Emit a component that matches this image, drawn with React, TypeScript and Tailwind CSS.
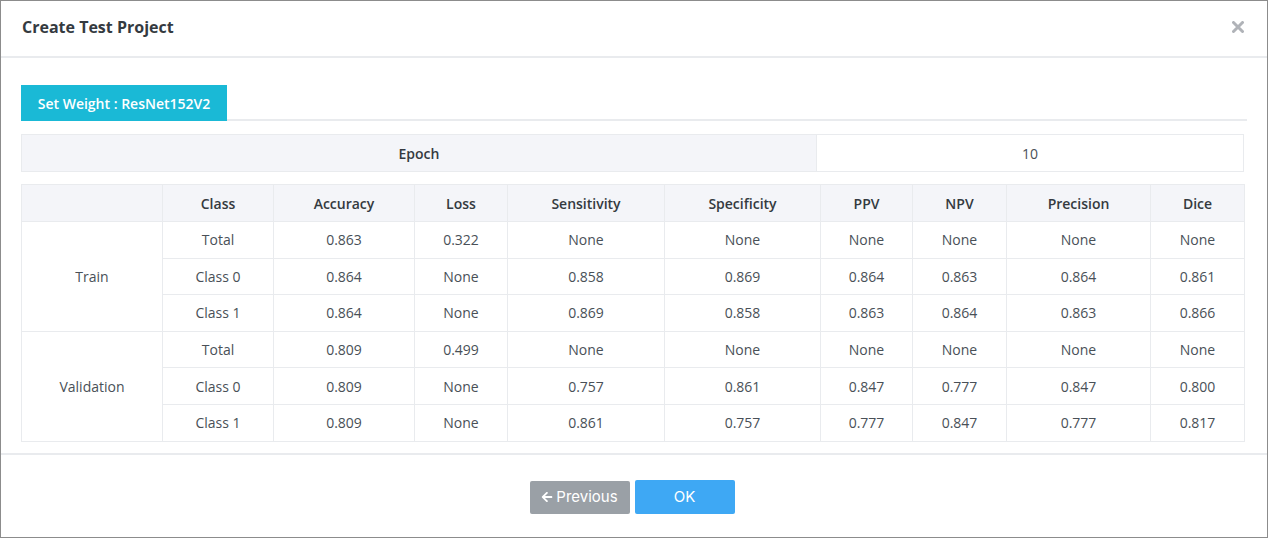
import React from "react";
import { FaArrowLeft } from "react-icons/fa";

const headers = ["", "Class", "Accuracy", "Loss", "Sensitivity", "Specificity", "PPV", "NPV", "Precision", "Dice"];
const widths = [141, 111, 141, 93, 157, 156, 92, 94, 144, 94];

const groups = [
  {
    name: "Train",
    rows: [
      ["Total", "0.863", "0.322", "None", "None", "None", "None", "None", "None"],
      ["Class 0", "0.864", "None", "0.858", "0.869", "0.864", "0.863", "0.864", "0.861"],
      ["Class 1", "0.864", "None", "0.869", "0.858", "0.863", "0.864", "0.863", "0.866"],
    ],
  },
  {
    name: "Validation",
    rows: [
      ["Total", "0.809", "0.499", "None", "None", "None", "None", "None", "None"],
      ["Class 0", "0.809", "None", "0.757", "0.861", "0.847", "0.777", "0.847", "0.800"],
      ["Class 1", "0.809", "None", "0.861", "0.757", "0.777", "0.847", "0.777", "0.817"],
    ],
  },
];

export default function App() {
  return (
    <div className="h-[538px] w-[1268px] bg-white font-['Open_Sans',sans-serif]">
      <div className="flex h-full w-full flex-col border border-[#8c8c8c]">
        {/* header */}
        <div className="flex h-[57px] items-start justify-between border-b-2 border-[#e9ebee] pl-[21px] pr-[23px] pt-[14px]">
          <h4 className="text-[16px] font-bold leading-[24px] text-[#343a40]">Create Test Project</h4>
          <svg width="12" height="12" viewBox="0 0 12 12" className="mt-[6px]">
            <path d="M1.5 1.5 L10.5 10.5 M10.5 1.5 L1.5 10.5" stroke="#b0b3b8" strokeWidth="3" strokeLinecap="round" />
          </svg>
        </div>

        {/* body */}
        <div className="px-[20px] pt-[27px]">
          <div className="flex border-b-2 border-[#e9ebee]">
            <div className="-mb-[2px] flex h-[36px] w-[206px] items-center justify-center bg-[#1ab9d6] text-[14px] font-semibold text-white">
              Set Weight : ResNet152V2
            </div>
          </div>

          <table className="mt-[13px] w-[1223px] table-fixed border-collapse text-[14px] text-[#495057]">
            <tbody>
              <tr className="h-[37px]">
                <td className="w-[795px] border border-[#e9ebee] bg-[#f4f5f9] text-center font-semibold text-[#343a40]">Epoch</td>
                <td className="border border-[#e9ebee] text-center">10</td>
              </tr>
            </tbody>
          </table>

          <table className="mt-[12px] w-[1223px] table-fixed border-collapse text-[14px] text-[#495057]">
            <colgroup>
              {widths.map((w, i) => (
                <col key={i} style={{ width: w }} />
              ))}
            </colgroup>
            <thead>
              <tr className="h-[37px] bg-[#f4f5f9]">
                {headers.map((h, i) => (
                  <th key={i} className="border border-[#e9ebee] text-center font-semibold text-[#343a40]">
                    {h}
                  </th>
                ))}
              </tr>
            </thead>
            <tbody>
              {groups.map((g) =>
                g.rows.map((r, ri) => (
                  <tr key={g.name + ri} className="h-[36.6px]">
                    {ri === 0 && (
                      <td rowSpan={3} className="border border-[#e9ebee] text-center">
                        {g.name}
                      </td>
                    )}
                    {r.map((c, ci) => (
                      <td key={ci} className="border border-[#e9ebee] text-center">
                        {c}
                      </td>
                    ))}
                  </tr>
                ))
              )}
            </tbody>
          </table>
        </div>

        {/* footer */}
        <div className="mt-[11px] flex flex-1 items-center justify-center gap-[5px] border-t-2 border-[#e9ebee] pr-[4px] pt-[2px] font-['Inter',sans-serif]">
          <button className="mt-[1px] flex h-[33px] w-[100px] items-center justify-center gap-[3px] rounded-[2px] bg-[#9aa0a6] text-[15px] text-white">
            <FaArrowLeft className="text-[12px]" />
            Previous
          </button>
          <button className="h-[34px] w-[100px] rounded-[2px] bg-[#3ea8f4] text-[15px] text-white">OK</button>
        </div>
      </div>
    </div>
  );
}
